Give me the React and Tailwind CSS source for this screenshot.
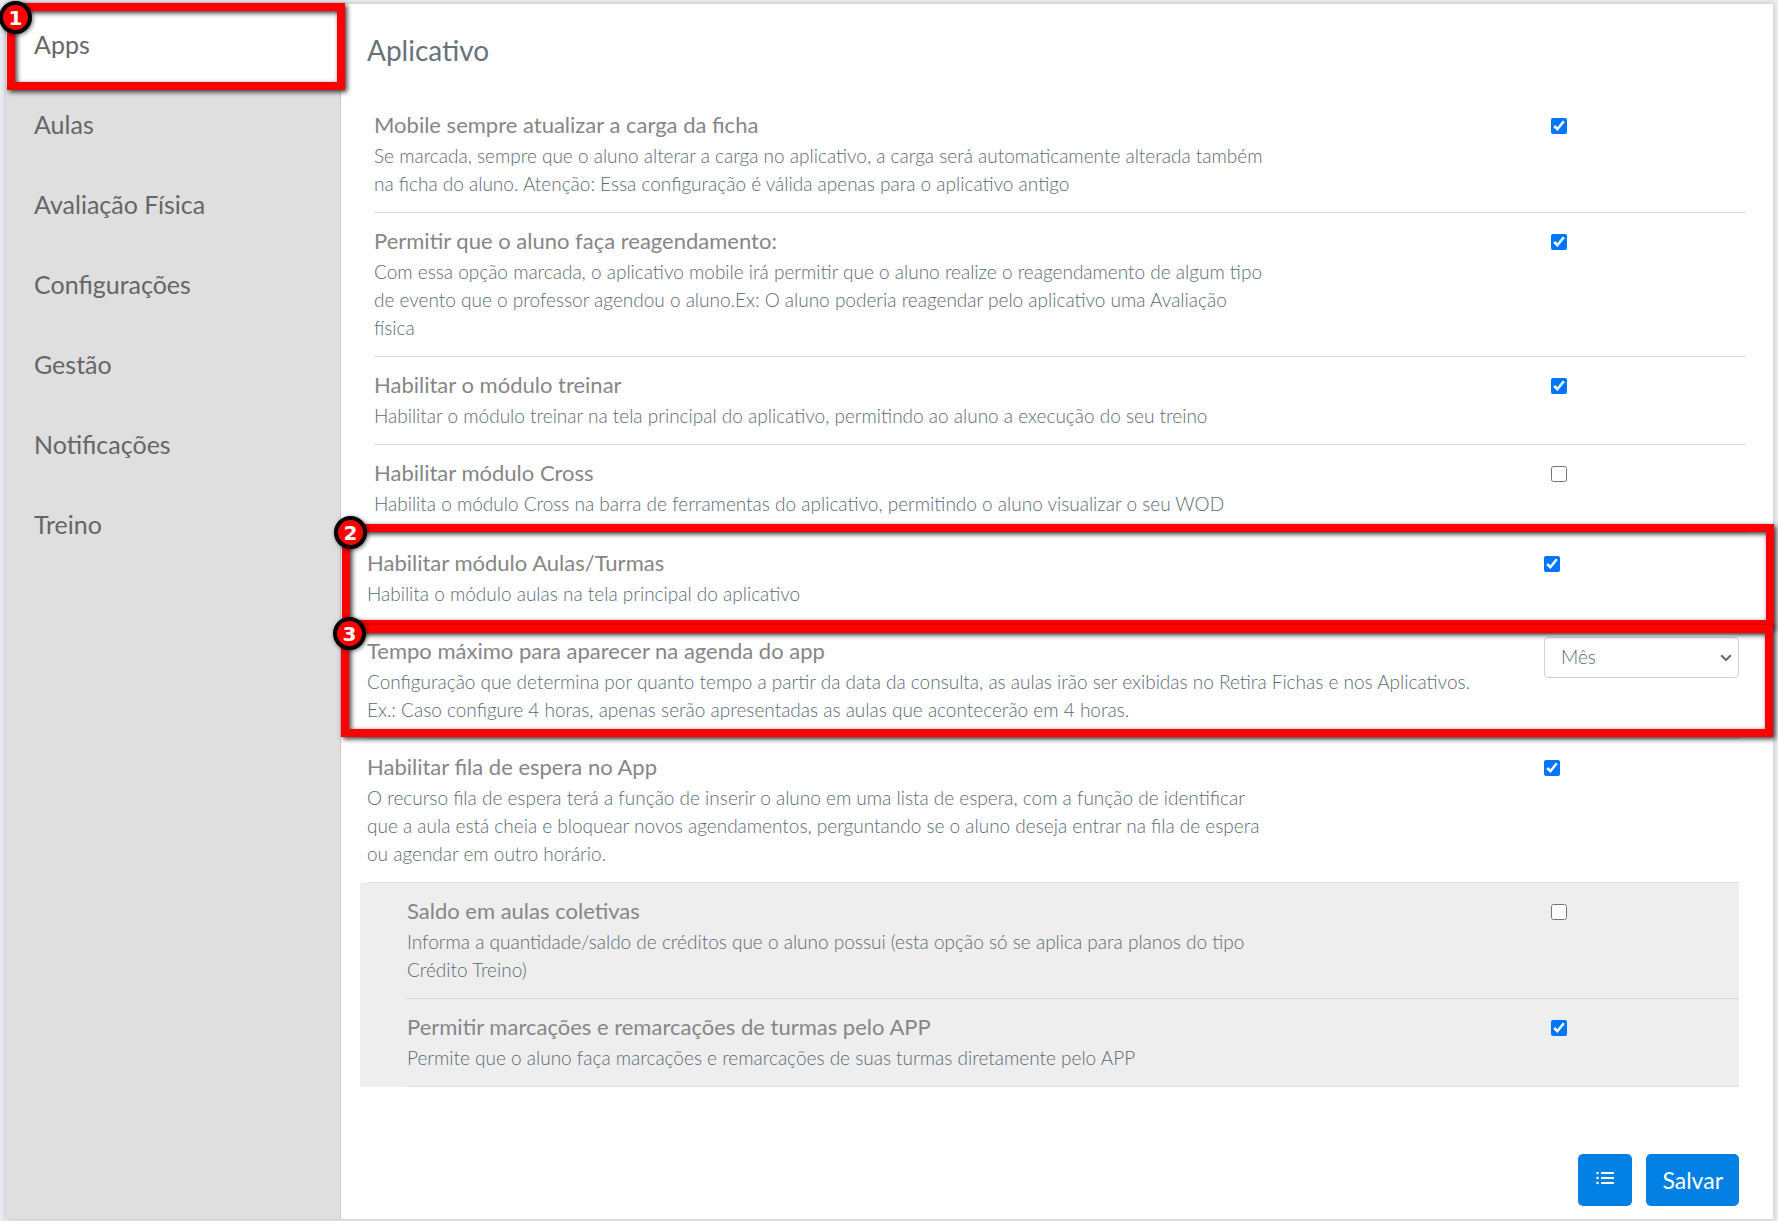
const sections = ['Apps', 'Aulas', 'Avaliação Física', 'Configurações', 'Gestão', 'Notificações', 'Treino'];

const generalSettings = [
  {
    id: 'atualizar-carga',
    title: 'Mobile sempre atualizar a carga da ficha',
    text: 'Se marcada, sempre que o aluno alterar a carga no aplicativo, a carga será automaticamente alterada também\nna ficha do aluno. Atenção: Essa configuração é válida apenas para o aplicativo antigo',
    checked: true,
  },
  {
    id: 'reagendamento',
    title: 'Permitir que o aluno faça reagendamento:',
    text: 'Com essa opção marcada, o aplicativo mobile irá permitir que o aluno realize o reagendamento de algum tipo\nde evento que o professor agendou o aluno.Ex: O aluno poderia reagendar pelo aplicativo uma Avaliação\nfísica',
    checked: true,
  },
  {
    id: 'modulo-treinar',
    title: 'Habilitar o módulo treinar',
    text: 'Habilitar o módulo treinar na tela principal do aplicativo, permitindo ao aluno a execução do seu treino',
    checked: true,
  },
  {
    id: 'modulo-cross',
    title: 'Habilitar módulo Cross',
    text: 'Habilita o módulo Cross na barra de ferramentas do aplicativo, permitindo o aluno visualizar o seu WOD',
    checked: false,
  },
];

const classSettings = [
  {
    id: 'modulo-aulas',
    title: 'Habilitar módulo Aulas/Turmas',
    text: 'Habilita o módulo aulas na tela principal do aplicativo',
    checked: true,
    step: { number: 2, box: '-top-[11px] -bottom-[6px] -left-[25px] -right-[35px]' },
  },
  {
    id: 'tempo-maximo',
    title: 'Tempo máximo para aparecer na agenda do app',
    text: 'Configuração que determina por quanto tempo a partir da data da consulta, as aulas irão ser exibidas no Retira Fichas e nos Aplicativos.\nEx.: Caso configure 4 horas, apenas serão apresentadas as aulas que acontecerão em 4 horas.',
    options: ['Mês', 'Semana', 'Dia'],
    step: { number: 3, box: 'top-[2px] bottom-[1px] -left-[26px] -right-[34px]' },
  },
  {
    id: 'fila-espera',
    title: 'Habilitar fila de espera no App',
    text: 'O recurso fila de espera terá a função de inserir o aluno em uma lista de espera, com a função de identificar\nque a aula está cheia e bloquear novos agendamentos, perguntando se o aluno deseja entrar na fila de espera\nou agendar em outro horário.',
    checked: true,
  },
];

const nestedSettings = [
  {
    id: 'saldo-coletivas',
    title: 'Saldo em aulas coletivas',
    text: 'Informa a quantidade/saldo de créditos que o aluno possui (esta opção só se aplica para planos do tipo\nCrédito Treino)',
    checked: false,
  },
  {
    id: 'marcacoes-app',
    title: 'Permitir marcações e remarcações de turmas pelo APP',
    text: 'Permite que o aluno faça marcações e remarcações de suas turmas diretamente pelo APP',
    checked: true,
  },
];

function StepMarker({ number, box, badge = '-top-4' }) {
  return (
    <div
      className={`pointer-events-none absolute z-10 border-8 border-[#ff0000] shadow-[2px_2px_5px_rgba(0,0,0,0.8),inset_2px_2px_5px_rgba(0,0,0,0.8)] ${box}`}
    >
      <span
        className={`absolute -left-4 flex h-[33px] w-[33px] items-center justify-center rounded-full border-4 border-black bg-[#ff0000] font-['DejaVu_Sans'] text-xl font-bold leading-none text-white shadow-[1px_1px_4px_rgba(0,0,0,0.6)] ${badge}`}
      >
        {number}
      </span>
    </div>
  );
}

function ListIcon() {
  return (
    <svg viewBox="0 0 18 14" className="mb-1 h-[14px] w-[18px]" fill="currentColor">
      {[1, 6, 11].map((y) => (
        <g key={y}>
          <circle cx="1.500" cy={y + 1} r="1.250" />
          <rect x="5" y={y} width="13" height="2" rx="0.500" />
        </g>
      ))}
    </svg>
  );
}

function SettingRow({ setting, nested = false }) {
  const { id, title, text, checked, options, step } = setting;
  return (
    <div className="relative flex justify-between border-b border-[#dcdcdc] pb-[14px] pt-[13px]">
      <div className={options ? 'max-w-[1150px]' : 'max-w-[950px]'}>
        <label htmlFor={id} className="block text-[22px] leading-[30px] text-[#868686]">
          {title}
        </label>
        <p className="mt-[2px] whitespace-pre-line text-[19px] font-light leading-7 text-[#5c6b75]">{text}</p>
      </div>
      <div className={nested ? 'w-[188px] shrink-0' : 'w-[195px] shrink-0'}>
        {options ? (
          <div className="relative mt-px">
            <select
              id={id}
              className="h-[41px] w-full appearance-none rounded-[4px] border border-[#ced4da] bg-white px-4 text-[19px] font-light text-[#5c6b75]"
            >
              {options.map((o) => (
                <option key={o}>{o}</option>
              ))}
            </select>
            <svg viewBox="0 0 12 8" className="pointer-events-none absolute right-[7px] top-[17px] h-2 w-3 text-[#5f6b73]">
              <path d="M1.2 1.2L6 6l4.800-4.800" fill="none" stroke="currentColor" strokeWidth="2" />
            </svg>
          </div>
        ) : (
          <input id={id} type="checkbox" defaultChecked={checked} className="mt-2 block h-4 w-4" />
        )}
      </div>
      {step && <StepMarker {...step} />}
    </div>
  );
}

export default function App() {
  return (
    <div className="min-h-screen bg-[#e9edf2] pb-[2px] pl-[6px] pr-[5px] pt-1 font-['Lato',sans-serif]">
      <div className="flex min-h-[calc(100vh-6px)] bg-white shadow-[0_0_6px_rgba(0,0,0,0.2)]">
        <nav className="w-[334px] shrink-0 bg-[#dfdfdf]">
          {sections.map((name, i) => (
            <a
              key={name}
              href="#"
              aria-current={i === 0 ? 'page' : undefined}
              className={`relative flex h-20 items-center pl-7 pt-px text-[25px] text-[#666] ${i === 0 ? 'bg-white' : ''}`}
            >
              {name}
              {i === 0 && <StepMarker number={1} box="-top-px -bottom-[6px] left-px -right-[5px]" badge="-top-[10px]" />}
            </a>
          ))}
        </nav>

        <main className="flex min-w-0 flex-1 flex-col border-l border-[#ccc] pb-3 pl-[26px] pr-[27px]">
          <h1 className="pb-[29px] pt-7 text-[28px] leading-9 text-[#66737b]">Aplicativo</h1>

          <div className="pb-[2px] pl-[7px]">
            {generalSettings.map((s) => (
              <SettingRow key={s.id} setting={s} />
            ))}
          </div>

          <div className="pr-[7px]">
            {classSettings.map((s) => (
              <SettingRow key={s.id} setting={s} />
            ))}
            <div className="-ml-[7px] bg-[#eee] pl-[47px]">
              {nestedSettings.map((s) => (
                <SettingRow key={s.id} setting={s} nested />
              ))}
            </div>
          </div>

          <div className="flex justify-end gap-[14px] pr-[7px] pt-[67px]">
            <button
              type="button"
              aria-label="Lista"
              className="flex h-[52px] w-[54px] items-center justify-center rounded-[5px] bg-[#0380e3] text-white"
            >
              <ListIcon />
            </button>
            <button type="button" className="h-[52px] rounded-[5px] bg-[#0380e3] px-4 text-[23px] text-white">
              Salvar
            </button>
          </div>
        </main>
      </div>
    </div>
  );
}
